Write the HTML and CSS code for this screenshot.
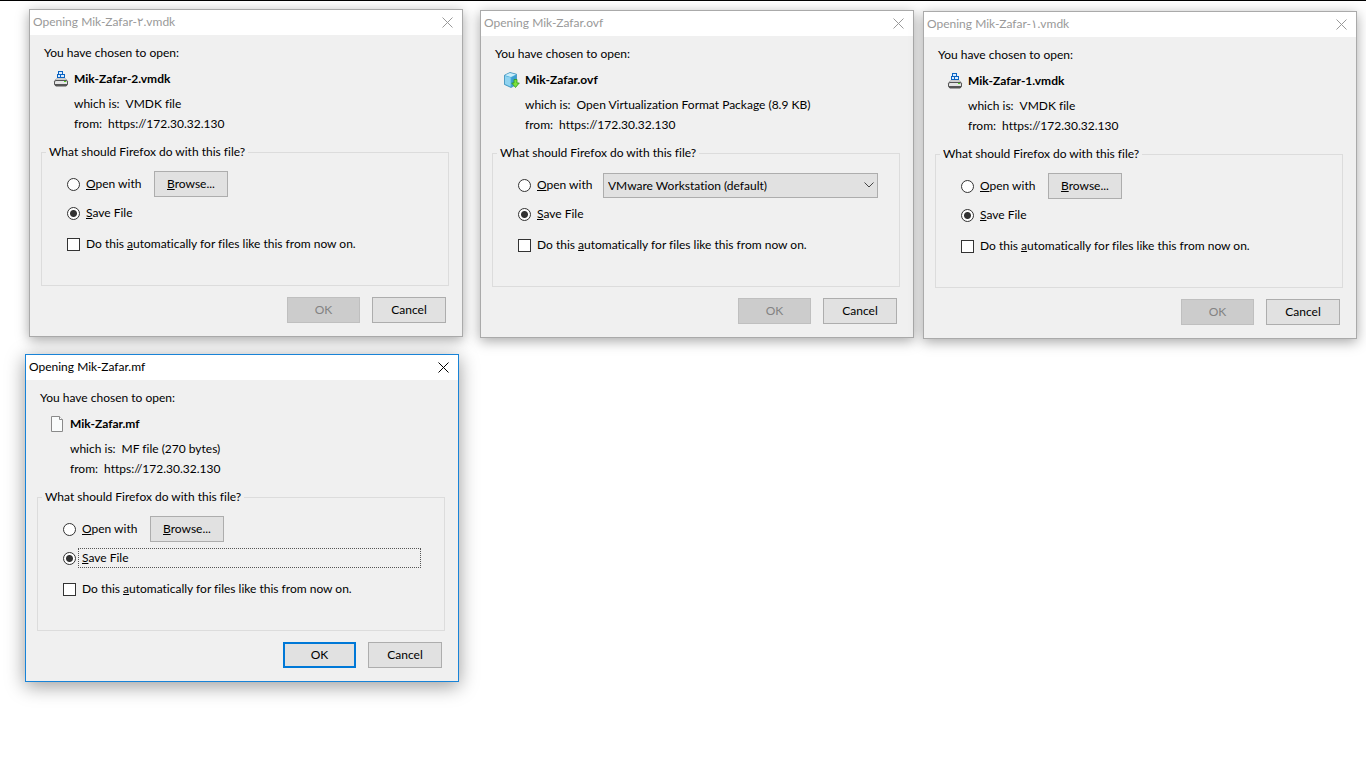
FILE: index.html
```html
<!DOCTYPE html>
<html lang="en">

<head>
    <title>Firefox Downloads</title>
    <meta charset="UTF-8">
    <meta name="viewport" content="width=device-width, initial-scale=1.0">
    <link rel="stylesheet" href="styles.css">
</head>

<body>
    <svg class="symbols" width="0" height="0">
        <symbol id="icon-disk" viewBox="0 0 16 16">
            <path d="M3 8h10l2 3H1z" fill="#f4f4f4" stroke="#777" stroke-width="0.6" />
            <rect x="1.5" y="9.5" width="13" height="5" rx="1.5" fill="#e4e4e4" stroke="#555" />
            <path d="M2 13h12v1.5l-1 1H3l-1-1z" fill="#555" />
            <path d="M11 10h2v1h-2z" fill="#4fd01f" />
            <rect x="5.5" y="0.5" width="4" height="3" fill="#d9ecff" stroke="#0a63c2" />
            <rect x="4.5" y="3.5" width="3" height="3" fill="#d9ecff" stroke="#0a63c2" />
            <rect x="7.5" y="3.5" width="4" height="3" fill="#d9ecff" stroke="#0a63c2" />
        </symbol>
        <symbol id="icon-package" viewBox="0 0 16 16">
            <path d="M.5 3.2L6 .5l6.5 1.7v10.3L7 15.5l-6.5-3z" fill="#4fb0dc" stroke="#2e86b5" stroke-width="0.7" />
            <path d="M1 3.3L6 .9l6 1.5L7 5z" fill="#c9edfa" />
            <path d="M1 4l5.6 1.6v9L1 12.1z" fill="#8fd3f0" />
            <path d="M7.4 5.6L12 3v9l-4.6 2.8z" fill="#3c9fd0" />
            <path d="M10 7.5h3V11h2.3l-3.8 4.5L7.7 11H10z" fill="#7be03c" stroke="#2e9a1c" stroke-width="0.8" />
        </symbol>
        <symbol id="icon-file" viewBox="0 0 16 16">
            <path d="M2.5.5h8l3 3v12h-11z" fill="#fafcfc" stroke="#8a8a8a" />
            <path d="M10.5.5v3h3" fill="#fff" stroke="#8a8a8a" />
        </symbol>
        <symbol id="icon-close" viewBox="0 0 11 11">
            <path d="M.5.5l10 10M10.5.5l-10 10" fill="none" stroke="currentColor" />
        </symbol>
    </svg>

    <form class="dialog dialog-disk2">
        <div class="titlebar">
            <span>Opening Mik-Zafar-٢.vmdk</span>
            <button type="button" class="close" aria-label="Close"><svg><use href="#icon-close" /></svg></button>
        </div>
        <div class="content">
            <p class="intro">You have chosen to open:</p>
            <div class="file-name"><svg><use href="#icon-disk" /></svg><b>Mik-Zafar-2.vmdk</b></div>
            <div class="info"><span>which is:</span><span>VMDK file</span></div>
            <div class="info"><span>from:</span><span>https://172.30.32.130</span></div>
            <fieldset>
                <legend>What should Firefox do with this file?</legend>
                <div class="row row-open">
                    <input type="radio" id="open1" name="action">
                    <label for="open1"><u>O</u>pen with</label>
                    <button type="button" class="button browse"><span><u>B</u>rowse...</span></button>
                </div>
                <div class="row row-save">
                    <input type="radio" id="save1" name="action" checked>
                    <label for="save1"><u>S</u>ave File</label>
                </div>
                <div class="row row-auto">
                    <input type="checkbox" id="auto1">
                    <label for="auto1">Do this <u>a</u>utomatically for files like this from now on.</label>
                </div>
            </fieldset>
            <div class="buttons">
                <button type="button" class="button ok" disabled>OK</button>
                <button type="button" class="button">Cancel</button>
            </div>
        </div>
    </form>

    <form class="dialog dialog-ovf">
        <div class="titlebar">
            <span>Opening Mik-Zafar.ovf</span>
            <button type="button" class="close" aria-label="Close"><svg><use href="#icon-close" /></svg></button>
        </div>
        <div class="content">
            <p class="intro">You have chosen to open:</p>
            <div class="file-name"><svg><use href="#icon-package" /></svg><b>Mik-Zafar.ovf</b></div>
            <div class="info"><span>which is:</span><span>Open Virtualization Format Package (8.9 KB)</span></div>
            <div class="info"><span>from:</span><span>https://172.30.32.130</span></div>
            <fieldset>
                <legend>What should Firefox do with this file?</legend>
                <div class="row row-open">
                    <input type="radio" id="open2" name="action">
                    <label for="open2"><u>O</u>pen with</label>
                    <div class="select-box">
                        <select aria-label="Application">
                            <option>VMware Workstation (default)</option>
                        </select>
                        <svg viewBox="0 0 10 6"><path d="M.5.5L5 5L9.5.5" fill="none" stroke="#444" /></svg>
                    </div>
                </div>
                <div class="row row-save">
                    <input type="radio" id="save2" name="action" checked>
                    <label for="save2"><u>S</u>ave File</label>
                </div>
                <div class="row row-auto">
                    <input type="checkbox" id="auto2">
                    <label for="auto2">Do this <u>a</u>utomatically for files like this from now on.</label>
                </div>
            </fieldset>
            <div class="buttons">
                <button type="button" class="button ok" disabled>OK</button>
                <button type="button" class="button">Cancel</button>
            </div>
        </div>
    </form>

    <form class="dialog dialog-disk1">
        <div class="titlebar">
            <span>Opening Mik-Zafar-١.vmdk</span>
            <button type="button" class="close" aria-label="Close"><svg><use href="#icon-close" /></svg></button>
        </div>
        <div class="content">
            <p class="intro">You have chosen to open:</p>
            <div class="file-name"><svg><use href="#icon-disk" /></svg><b>Mik-Zafar-1.vmdk</b></div>
            <div class="info"><span>which is:</span><span>VMDK file</span></div>
            <div class="info"><span>from:</span><span>https://172.30.32.130</span></div>
            <fieldset>
                <legend>What should Firefox do with this file?</legend>
                <div class="row row-open">
                    <input type="radio" id="open3" name="action">
                    <label for="open3"><u>O</u>pen with</label>
                    <button type="button" class="button browse"><span><u>B</u>rowse...</span></button>
                </div>
                <div class="row row-save">
                    <input type="radio" id="save3" name="action" checked>
                    <label for="save3"><u>S</u>ave File</label>
                </div>
                <div class="row row-auto">
                    <input type="checkbox" id="auto3">
                    <label for="auto3">Do this <u>a</u>utomatically for files like this from now on.</label>
                </div>
            </fieldset>
            <div class="buttons">
                <button type="button" class="button ok" disabled>OK</button>
                <button type="button" class="button">Cancel</button>
            </div>
        </div>
    </form>

    <form class="dialog dialog-mf active">
        <div class="titlebar">
            <span>Opening Mik-Zafar.mf</span>
            <button type="button" class="close" aria-label="Close"><svg><use href="#icon-close" /></svg></button>
        </div>
        <div class="content">
            <p class="intro">You have chosen to open:</p>
            <div class="file-name"><svg><use href="#icon-file" /></svg><b>Mik-Zafar.mf</b></div>
            <div class="info"><span>which is:</span><span>MF file (270 bytes)</span></div>
            <div class="info"><span>from:</span><span>https://172.30.32.130</span></div>
            <fieldset>
                <legend>What should Firefox do with this file?</legend>
                <div class="row row-open">
                    <input type="radio" id="open4" name="action">
                    <label for="open4"><u>O</u>pen with</label>
                    <button type="button" class="button browse"><span><u>B</u>rowse...</span></button>
                </div>
                <div class="row row-save">
                    <input type="radio" id="save4" name="action" checked>
                    <label for="save4" class="focused"><u>S</u>ave File</label>
                </div>
                <div class="row row-auto">
                    <input type="checkbox" id="auto4">
                    <label for="auto4">Do this <u>a</u>utomatically for files like this from now on.</label>
                </div>
            </fieldset>
            <div class="buttons">
                <button type="button" class="button ok default">OK</button>
                <button type="button" class="button">Cancel</button>
            </div>
        </div>
    </form>
</body>

</html>
```
FILE: styles.css
```css
* {
    box-sizing: border-box;
}

body {
    margin: 0;
    min-height: 100vh;
    background: #fff;
    border-top: 1px solid #000;
    font-family: Lato, "DejaVu Sans", sans-serif;
    font-size: 12px;
    font-variant-ligatures: none;
    line-height: 18px;
    color: #000;
}

button,
select {
    font: inherit;
    color: inherit;
}

u {
    text-underline-offset: 1px;
}

.symbols {
    position: absolute;
}

/* Dialog windows, placed freely on the desktop */
.dialog {
    position: absolute;
    width: 434px;
    background: #f0f0f0;
    border: 1px solid #aaa;
    box-shadow: 0 3px 12px rgba(0, 0, 0, 0.35);
}

.dialog-disk2 {
    left: 29px;
    top: 9px;
}

.dialog-ovf {
    left: 480px;
    top: 10px;
}

.dialog-disk1 {
    left: 923px;
    top: 11px;
}

.dialog-mf {
    left: 25px;
    top: 354px;
}

.active {
    border-color: #1883d7;
    box-shadow: 0 4px 18px rgba(0, 0, 0, 0.4);
}

.titlebar {
    display: flex;
    align-items: center;
    justify-content: space-between;
    height: 25px;
    padding: 0 9px 1px 3px;
    background: #fff;
    color: #999;
}

.active .titlebar {
    color: #000;
}

.close {
    display: flex;
    padding: 0;
    border: none;
    background: none;
}

.close svg {
    width: 11px;
    height: 11px;
}

.content {
    padding: 9px 13px 13px 11px;
}

.intro {
    margin: 0 0 8px 3px;
}

.file-name {
    display: flex;
    align-items: center;
    gap: 5px;
    margin: 0 0 6px 12px;
}

.file-name svg {
    width: 16px;
    height: 16px;
}

.info {
    display: flex;
    gap: 6px;
    margin-left: 33px;
    line-height: 20px;
}

fieldset {
    margin: 9px 0 11px;
    padding: 10px 4px 31px;
    border: 1px solid #dcdcdc;
}

legend {
    padding: 0 3px;
}

/* Choices inside the group box */
.row {
    display: flex;
    align-items: center;
    gap: 6px;
    height: 20px;
    margin: 0 19px 0 21px;
}

.row-open {
    height: 26px;
}

.row-open label {
    width: 60px;
}

.row-save {
    margin-top: 6px;
}

.row-auto {
    margin-top: 11px;
}

input {
    appearance: none;
    flex: none;
    width: 13px;
    height: 13px;
    margin: 0;
    background: #fff;
    border: 1px solid #333;
}

input[type="radio"] {
    border-radius: 50%;
}

input[type="radio"]:checked {
    background: radial-gradient(circle, #333 3px, #fff 4px);
}

.focused {
    flex: 1;
    margin-left: -4px;
    padding-left: 3px;
    border: 1px dotted #555;
}

.button {
    width: 74px;
    height: 26px;
    padding: 0;
    background: #e1e1e1;
    border: 1px solid #adadad;
}

.button:disabled {
    background: #ccc;
    border-color: #bfbfbf;
    color: #838383;
}

.ok {
    width: 73px;
}

.default {
    border: 2px solid #0078d7;
}

.browse {
    margin-left: 2px;
}

.select-box {
    position: relative;
    flex: 1;
    align-self: flex-end;
    margin-right: -2px;
}

.select-box select {
    display: block;
    appearance: none;
    width: 100%;
    height: 25px;
    padding: 0 4px;
    background: #e1e1e1;
    border: 1px solid #adadad;
    border-radius: 0;
}

.select-box svg {
    position: absolute;
    right: 4px;
    top: 9px;
    width: 10px;
    height: 6px;
    pointer-events: none;
}

.buttons {
    display: flex;
    justify-content: flex-end;
    gap: 12px;
    margin-right: 3px;
}
```
